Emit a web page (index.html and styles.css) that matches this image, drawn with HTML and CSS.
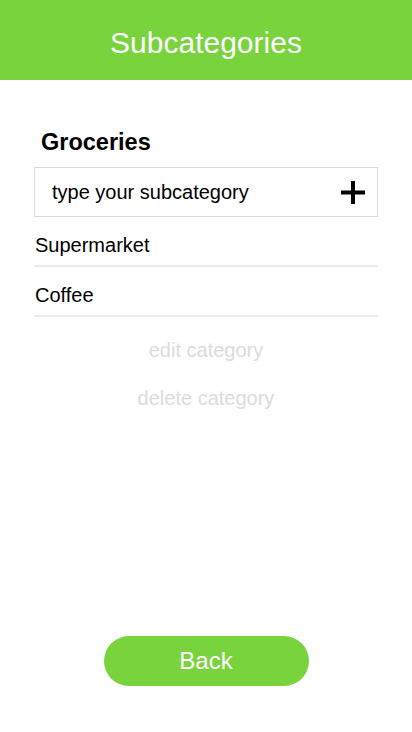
FILE: index.html
```html
<!DOCTYPE html>
<html lang="en">
<head>
<meta charset="utf-8">
<title>Subcategories</title>
<link rel="stylesheet" href="styles.css">
</head>
<body>
<div class="app">
  <header class="topbar">
    <h1 class="topbar-title">Subcategories</h1>
  </header>
  <main class="content">
    <h2 class="category-name">Groceries</h2>
    <div class="add-field">
      <span class="add-placeholder">type your subcategory</span>
      <svg class="add-icon" width="24" height="23" viewBox="0 0 24 23" aria-hidden="true">
        <rect x="10" y="0" width="4" height="23" fill="#000"/>
        <rect x="0" y="9.5" width="24" height="4" fill="#000"/>
      </svg>
    </div>
    <ul class="sub-list">
      <li class="sub-item">Supermarket</li>
      <li class="sub-item">Coffee</li>
    </ul>
    <div class="actions">
      <span class="action-link">edit category</span>
      <span class="action-link">delete category</span>
    </div>
  </main>
  <footer class="footer">
    <button class="back-btn" type="button">Back</button>
  </footer>
</div>
</body>
</html>
```

FILE: styles.css
```css
* {
  box-sizing: border-box;
}

html, body {
  margin: 0;
  padding: 0;
  background: #ffffff;
}

body {
  font-family: "Liberation Sans", Arial, sans-serif;
  color: #000;
}

.app {
  min-height: 100vh;
  display: flex;
  flex-direction: column;
}

.topbar {
  height: 80px;
  background: #79d33d;
  padding-top: 28px;
  text-align: center;
}

.topbar-title {
  margin: 0;
  font-size: 30px;
  line-height: 30px;
  font-weight: normal;
  color: #ffffff;
}

.content {
  padding: 48px 34px 0 34px;
}

.category-name {
  margin: 0 0 11px 0;
  padding-left: 7px;
  font-size: 23.5px;
  line-height: 28px;
  font-weight: bold;
}

.add-field {
  height: 50px;
  border: 1px solid #dadada;
  display: flex;
  align-items: center;
  justify-content: space-between;
  padding: 0 12px 0 17px;
}

.add-placeholder {
  font-size: 20px;
  color: #000;
}

.add-icon {
  display: block;
}

.sub-list {
  list-style: none;
  margin: 0;
  padding: 0;
}

.sub-item {
  font-size: 20px;
  line-height: 24px;
  padding: 16px 0 8px 1px;
  border-bottom: 2px solid #ebebeb;
}

.actions {
  margin-top: 21px;
  display: flex;
  flex-direction: column;
  align-items: center;
  gap: 24px;
}

.action-link {
  font-size: 20px;
  line-height: 24px;
  color: #dcdcdc;
}

.footer {
  margin-top: auto;
  padding-bottom: 46px;
  display: flex;
  justify-content: center;
}

.back-btn {
  width: 205px;
  height: 50px;
  border: none;
  border-radius: 25px;
  background: #79d33d;
  color: #ffffff;
  font-family: "Liberation Sans", Arial, sans-serif;
  font-size: 24px;
  padding: 0;
  cursor: pointer;
}
```
